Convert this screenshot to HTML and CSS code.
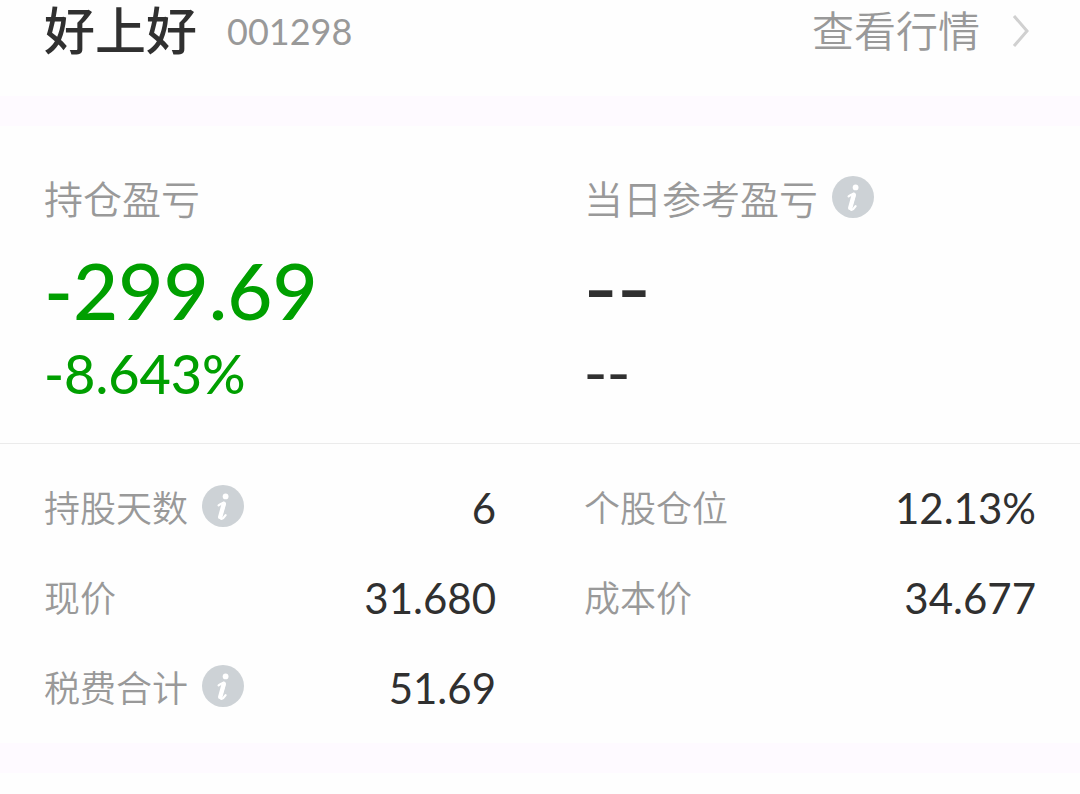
FILE: index.html
```
<!DOCTYPE html>
<html lang="zh-CN">
<head>
  <meta charset="UTF-8">
  <meta name="viewport" content="width=device-width, initial-scale=1.0">
  <title>好上好 001298</title>
  <link rel="stylesheet" href="styles.css">
</head>
<body>
  <svg class="sprite" aria-hidden="true">
    <symbol id="icon-info" viewBox="0 0 42 42">
      <circle cx="21" cy="21" r="21" fill="#cdd2d6"/>
      <circle cx="23.6" cy="11.4" r="2.9" fill="#fff"/>
      <path d="M16.6 20.4q4.4-3.2 5.6-2.6.6.5 0 2.8l-3 9.8q-1 3.6.4 3.4 1.8-.2 4-3.6" fill="none" stroke="#fff" stroke-width="2.2" stroke-linecap="round" stroke-linejoin="round"/>
      <path d="M21.8 18.8l-3.6 13.2" fill="none" stroke="#fff" stroke-width="4.4" stroke-linecap="round"/>
    </symbol>
  </svg>

  <header class="stock-header">
    <h1 class="stock-name">好上好</h1>
    <span class="stock-code">001298</span>
    <a class="quote-link" href="#">
      查看行情
      <svg class="arrow" viewBox="0 0 18 34" aria-hidden="true">
        <path d="M2 2l13 15L2 32" fill="none" stroke="#d0d0d0" stroke-width="3"/>
      </svg>
    </a>
  </header>

  <main class="position">
    <section class="summary">
      <div class="summary-item loss">
        <h2 class="summary-label">持仓盈亏</h2>
        <p class="amount">-299.69</p>
        <p class="rate">-8.643%</p>
      </div>
      <div class="summary-item empty">
        <h2 class="summary-label">
          当日参考盈亏
          <button class="info" type="button" aria-label="说明"><svg><use href="#icon-info"/></svg></button>
        </h2>
        <p class="amount">--</p>
        <p class="rate">--</p>
      </div>
    </section>

    <dl class="details">
      <div class="detail">
        <dt>
          持股天数
          <button class="info" type="button" aria-label="说明"><svg><use href="#icon-info"/></svg></button>
        </dt>
        <dd>6</dd>
      </div>
      <div class="detail">
        <dt>个股仓位</dt>
        <dd>12.13%</dd>
      </div>
      <div class="detail">
        <dt>现价</dt>
        <dd>31.680</dd>
      </div>
      <div class="detail">
        <dt>成本价</dt>
        <dd>34.677</dd>
      </div>
      <div class="detail">
        <dt>
          税费合计
          <button class="info" type="button" aria-label="说明"><svg><use href="#icon-info"/></svg></button>
        </dt>
        <dd>51.69</dd>
      </div>
    </dl>
  </main>
</body>
</html>
```
FILE: styles.css
```
* {
  margin: 0;
  padding: 0;
  box-sizing: border-box;
}

body {
  font-family: Lato, 'Noto Sans CJK SC', sans-serif;
  background: #fefefe;
  color: #303030;
}

.sprite {
  display: none;
}

.stock-header {
  display: flex;
  align-items: center;
  padding: 0 50px 34px 44px;
  line-height: 62px;
}

.stock-name {
  font-size: 51px;
  font-weight: 500;
}

.stock-code {
  margin-left: 30px;
  font-size: 36px;
  color: #999;
}

.quote-link {
  display: flex;
  align-items: center;
  gap: 32px;
  margin-left: auto;
  font-size: 42px;
  font-weight: 350;
  color: #999;
  text-decoration: none;
}

.arrow {
  width: 18px;
  height: 34px;
}

/* tinted bands above and below the position card */
.position {
  border-top: 30px solid #fefaff;
  border-bottom: 30px solid #fefaff;
}

.summary {
  display: grid;
  grid-template-columns: 1fr 1fr;
  padding: 43px 0 32px;
  border-bottom: 1px solid #ebebeb;
}

.summary-item {
  padding: 0 44px;
}

.summary-label {
  display: flex;
  align-items: center;
  gap: 14px;
  font-size: 39px;
  font-weight: 350;
  line-height: 60px;
  color: #999;
}

.info {
  display: flex;
  margin-bottom: 4px;
  border: none;
  background: none;
  cursor: pointer;
}

.info svg {
  width: 42px;
  height: 42px;
}

.amount {
  font-size: 78px;
  font-weight: 500;
  line-height: 94px;
  margin-top: 14px;
}

.rate {
  font-size: 54px;
  font-weight: 500;
  line-height: 74px;
}

.loss .amount,
.loss .rate {
  color: #009f00;
}

/* no value yet: wider dashes */
.empty .amount,
.empty .rate {
  font-family: Inter, sans-serif;
}

.empty .amount {
  font-size: 72px;
}

.empty .rate {
  font-size: 50px;
}

.details {
  display: grid;
  grid-template-columns: 1fr 1fr;
  padding: 19px 0 10px;
}

.detail {
  display: flex;
  align-items: center;
  justify-content: space-between;
  padding: 0 44px;
  line-height: 90px;
}

.detail dt {
  display: flex;
  align-items: center;
  gap: 14px;
  font-size: 36px;
  font-weight: 350;
  color: #999;
}

.detail dd {
  font-size: 42px;
}
```
